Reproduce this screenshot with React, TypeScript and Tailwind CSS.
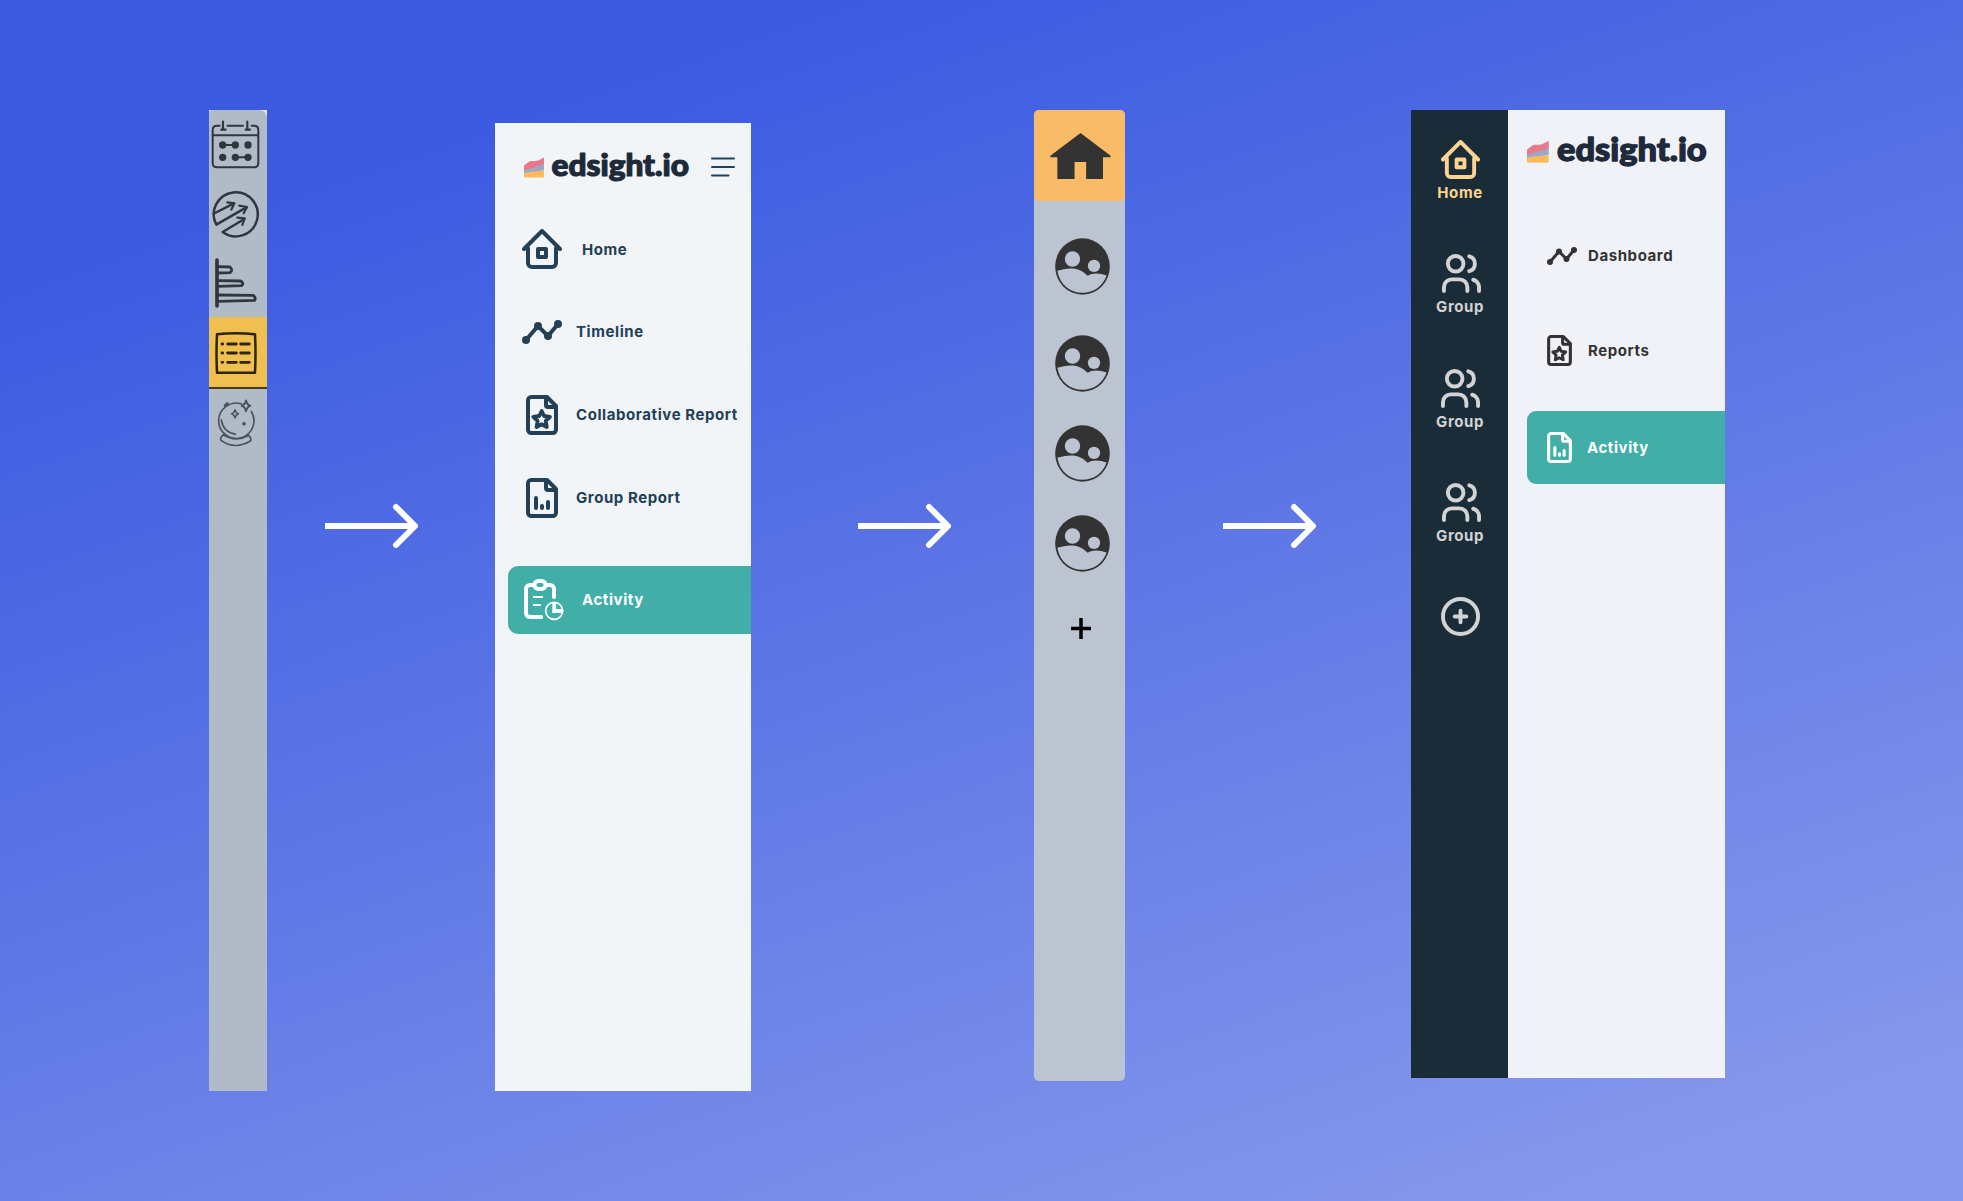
import type { ReactNode } from 'react';

type IconProps = { className?: string };

function Label({ className = '', children }: { className?: string; children: ReactNode }) {
  return (
    <span className={`whitespace-nowrap font-['Inter',sans-serif] text-[15px] leading-5 font-[650] tracking-[0.58px] ${className}`}>
      {children}
    </span>
  );
}

function HomeIcon({ className }: IconProps) {
  return (
    <svg viewBox="0 0 20 20" className={className} fill="none" stroke="currentColor" strokeWidth="2" strokeLinecap="round" strokeLinejoin="round">
      <path d="M1 10l9-9 9 9" />
      <path d="M3 9.5V17a2 2 0 0 0 2 2h10a2 2 0 0 0 2-2V9.500" />
      <path d="M8 10h4v4H8z" />
    </svg>
  );
}

function TimelineIcon({ className }: IconProps) {
  return (
    <svg viewBox="0 0 20 12" className={className} fill="currentColor">
      <path d="M2 10l6-7 5 5 5-6" fill="none" stroke="currentColor" strokeWidth="2" />
      <circle cx="2" cy="10" r="2" />
      <circle cx="8" cy="3" r="2" />
      <circle cx="13" cy="8" r="2" />
      <circle cx="18" cy="2" r="2" />
    </svg>
  );
}

function FileIcon({ className, children }: IconProps & { children: ReactNode }) {
  return (
    <svg viewBox="0 0 16 20" className={className} fill="none" stroke="currentColor" strokeWidth="2" strokeLinecap="round" strokeLinejoin="round">
      <path d="M2.600 1h7.900L15 5.500v11.900a1.600 1.600 0 0 1-1.600 1.600H2.600A1.600 1.600 0 0 1 1 17.400V2.600A1.600 1.600 0 0 1 2.600 1z" />
      <path d="M10 1.200V5a1 1 0 0 0 1 1h3.800" />
      {children}
    </svg>
  );
}

function FileStarIcon({ className }: IconProps) {
  return (
    <FileIcon className={className}>
      <path d="M7.850 8l1.200 2.500 2.950.4-2.150 2.050.55 3.050-2.550-1.350L5.300 16l.5-3.050-2.150-2.050 2.950-.4z" strokeWidth="1.900" />
    </FileIcon>
  );
}

function FileChartIcon({ className }: IconProps) {
  return (
    <FileIcon className={className}>
      <path d="M5 10v5M8 14v1M11 12v3" />
    </FileIcon>
  );
}

function ClipboardIcon({ className }: IconProps) {
  return (
    <svg viewBox="0 0 20 21" className={className} fill="none" stroke="currentColor" strokeWidth="2" strokeLinecap="round">
      <rect x="5.200" y="1" width="5.600" height="4" rx="2" />
      <path d="M4.500 3H3a2 2 0 0 0-2 2v12a2 2 0 0 0 2 2h5.600M11.500 3H13a2 2 0 0 1 2 2v4" />
      <path d="M4.500 9h5M4.500 13h4" strokeWidth="1" strokeLinecap="butt" />
      <circle cx="15.100" cy="15.900" r="4.250" strokeWidth=".85" />
      <path d="M15.100 11.600V16h4.300" strokeLinejoin="miter" strokeLinecap="butt" strokeWidth="1.900" />
    </svg>
  );
}

function GroupIcon({ className }: IconProps) {
  return (
    <svg viewBox="0 0 20 20" className={className} fill="none" stroke="currentColor" strokeWidth="2" strokeLinecap="round">
      <circle cx="7" cy="5" r="4" />
      <path d="M14 1.200a3.950 3.950 0 0 1 0 7.600" />
      <path d="M1 19v-2a4 4 0 0 1 4-4h4a4 4 0 0 1 4 4v2" />
      <path d="M16 13.200a4 4 0 0 1 3 3.800v2" />
    </svg>
  );
}

function CirclePlusIcon({ className }: IconProps) {
  return (
    <svg viewBox="0 0 20 20" className={className} fill="none" stroke="currentColor" strokeWidth="2" strokeLinecap="round">
      <circle cx="10" cy="10" r="9" />
      <path d="M10 7v6M7 10h6" />
    </svg>
  );
}

function Logo({ className }: IconProps) {
  return (
    <svg viewBox="0 0 168 32" className={`overflow-visible ${className}`}>
      <path d="M0 17H20V22.500Q20 23.500 19 23.500H1Q0 23.500 0 22.500z" fill="#ffba5c" />
      <path d="M20 9V16.200C14 18 9 16.500 0 19.200V13z" fill="#9ba9c6" />
      <path d="M0 11.500L5 7.700Q6 7 7.500 7H11Q13 7 14.500 6.200L20 3.500V9.700C14 13 8 12.500 0 17z" fill="#e8798c" />
      <text
        x="27.500"
        y="22.200"
        textLength="137.500"
        lengthAdjust="spacingAndGlyphs"
        className="fill-[#1e2a3a] stroke-[#1e2a3a] font-['Lato',sans-serif] text-[30px] font-black"
        strokeWidth="1.200"
        strokeLinejoin="round"
      >
        edsight.io
      </text>
    </svg>
  );
}

function Arrow({ className }: IconProps) {
  return (
    <svg viewBox="0 0 94 46" className={className} fill="none" stroke="white" strokeWidth="6">
      <path d="M0 23h88" />
      <path d="M71 4l19 19-19 19" strokeLinecap="round" strokeLinejoin="round" />
    </svg>
  );
}

function SketchIcons() {
  return (
    <>
      <svg viewBox="42 30 174 621" className="h-[207px] w-[58px]" fill="none" stroke="#30363e" strokeWidth="6" strokeLinecap="round" strokeLinejoin="round">
        <path d="M74 77h-8q-13 0-13 13v99q0 13 13 13h111q13 0 13-13V90q0-13-13-13h-7M97 77h47M54 106h135" />
        <path d="M84 65v23M79 89h13M157 65v23M152 89h13" strokeWidth="6.500" />
        <path d="M83 135h38M121 172h38" />
        <g fill="#30363e">
          <circle cx="83" cy="135" r="8" />
          <circle cx="121" cy="135" r="8" />
          <circle cx="159" cy="135" r="8" />
          <circle cx="83" cy="172" r="8" />
          <circle cx="121" cy="172" r="8" />
          <circle cx="159" cy="172" r="8" />
        </g>
        <path d="M64 374A66 66 0 1 1 83 396M64 374L154 322M83 396l65-39M60 339l57-29" strokeWidth="7.500" />
        <path d="M97 307l21 3-9 19M133 317l23 4-10 19M127 353l22 2-7 20" strokeWidth="6.500" />
        <path d="M66 480v138" strokeWidth="11" />
        <path d="M69 500l36 1q10 9 0 17l-36 1M69 542l68 1q11 7 3 14l-71 2M69 585l105 1q10 6 5 15l-110 3" strokeWidth="8.500" />
      </svg>
      <div className="flex h-[72px] items-start border-b-2 border-[#4a3a1c] bg-[#efc050]">
        <svg viewBox="42 650 174 210" className="h-[70px] w-[58px]" fill="none" stroke="#2e2410" strokeWidth="7.500" strokeLinejoin="round" strokeLinecap="round">
          <path d="M66 702q55-6 114 0 3 56 0 115-57 1-114 0-3-60 0-115z" />
          <path d="M98 731h26M137 731h26M98 758h26M137 758h26M98 786h26M137 786h26M81 731h2M81 758h2M81 786h2" strokeWidth="8.500" />
        </svg>
      </div>
      <svg viewBox="42 866 174 194" className="h-[65px] w-[58px]" fill="none" stroke="#4b525c" strokeWidth="5" strokeLinejoin="round" strokeLinecap="round">
        <path d="M139 910A53 53 0 1 0 169 933M84 1003q-8 7-7 16 43 31 90 2 2-10-6-16M84 1003q38 23 77 2" />
        <path d="M79 958q5 36 42 43" />
        <path d="M153 900q3 13 13 16-10 3-13 16-3-13-13-16 10-3 13-16z" strokeWidth="6" />
        <path d="M120 928q2 9 10 12-8 3-10 12-2-9-10-12 8-3 10-12z" strokeWidth="5" />
        <circle cx="147" cy="970" r="3" fill="#4b525c" />
        <path d="M90 915l7-6" strokeWidth="8" />
      </svg>
    </>
  );
}

function AvatarIcon({ className }: IconProps) {
  return (
    <svg viewBox="105 413 165 170" className={className}>
      <ellipse cx="187.500" cy="498" rx="82" ry="84.500" fill="#333333" />
      <g fill="#bcc3d1">
        <circle cx="157.500" cy="475.500" r="23" />
        <circle cx="222" cy="496" r="18.500" />
        <path d="M112 511C140 503 174 496 203 526C220 515 240 519 260 525C248 557 221 577 187 577C150 577 120 554 112 511z" />
      </g>
    </svg>
  );
}

function RailItem({ className = '', iconClass, icon, label }: { className?: string; iconClass: string; icon: ReactNode; label: string }) {
  return (
    <div className={`flex h-[114px] flex-col items-center ${className}`}>
      <div className={`flex ${iconClass}`}>{icon}</div>
      <Label className="mt-[4px] pl-px">{label}</Label>
    </div>
  );
}

export default function App() {
  return (
    <main className="flex h-[1201px] w-[1963px] items-start overflow-hidden bg-[linear-gradient(161deg,#3c5be1_16%,#8799ec_94%)]">
      <section className="mt-[110px] ml-[209px] h-[981px] w-[58px] shrink-0 bg-[#e9ecf2]">
        <div className="flex h-full flex-col rounded-tl-[3px] rounded-tr-[8px] bg-[#b1bbc8]">
          <SketchIcons />
        </div>
      </section>

      <Arrow className="mt-[503px] ml-[58px] h-[46px] w-[94px] shrink-0" />

      <section className="mt-[123px] ml-[76px] flex h-[968px] w-[256px] shrink-0 flex-col bg-[#f1f5f8] text-[#234057]">
        <header className="flex h-[84px] items-start pt-[31px] pl-[29px]">
          <Logo className="h-[32px] w-[168px]" />
          <svg viewBox="0 0 24 20" className="mt-[3px] ml-[19px] h-[20px] w-[24px]" stroke="currentColor" strokeWidth="2" strokeLinecap="round">
            <path d="M1 1.500h22M1 10h22M1 18.500h16.500" />
          </svg>
        </header>
        <nav className="flex flex-col">
          <div className="flex h-[84px] items-center pl-[27px]">
            <HomeIcon className="size-[40px]" />
            <Label className="mt-px ml-[20px]">Home</Label>
          </div>
          <div className="flex h-[82px] items-center pl-[27px]">
            <TimelineIcon className="h-[24px] w-[40px]" />
            <Label className="ml-[14px]">Timeline</Label>
          </div>
          <div className="flex h-[84px] items-center pl-[31px]">
            <FileStarIcon className="h-[40px] w-[32px]" />
            <Label className="ml-[18px]">Collaborative Report</Label>
          </div>
          <div className="flex h-[82px] items-center pl-[31px]">
            <FileChartIcon className="h-[40px] w-[32px]" />
            <Label className="ml-[18px]">Group Report</Label>
          </div>
          <div className="mt-[27px] ml-[13px] flex h-[68px] items-center rounded-l-[10px] bg-[#41afa7] pl-[16px] text-white">
            <ClipboardIcon className="h-[42px] w-[40px]" />
            <Label className="ml-[18px]">Activity</Label>
          </div>
        </nav>
      </section>

      <Arrow className="mt-[503px] ml-[107px] h-[46px] w-[94px] shrink-0" />

      <section className="mt-[110px] ml-[82px] flex h-[971px] w-[91px] shrink-0 flex-col rounded-[5px] bg-[#bcc3d1]">
        <div className="flex h-[91px] justify-center rounded-[5px] bg-[#f9bb67] pt-[23px]">
          <svg viewBox="90 98 182 139" className="ml-[2px] h-[46px] w-[61px]" fill="#333333">
            <path d="M181 98l91 69v4h-23v66h-51v-51h-35v51h-52v-66H90v-4z" />
          </svg>
        </div>
        <div className="flex flex-col pl-[21px]">
          <AvatarIcon className="mt-[37px] h-[57px] w-[55px]" />
          <AvatarIcon className="mt-[40px] h-[57px] w-[55px]" />
          <AvatarIcon className="mt-[33px] h-[57px] w-[55px]" />
          <AvatarIcon className="mt-[33px] h-[57px] w-[55px]" />
          <svg viewBox="0 0 20 21" className="mt-[46px] ml-[16px] h-[21px] w-[20px]" stroke="black" strokeWidth="3.500">
            <path d="M10 0v21M0 10.500h20" />
          </svg>
        </div>
      </section>

      <Arrow className="mt-[503px] ml-[98px] h-[46px] w-[94px] shrink-0" />

      <section className="mt-[110px] ml-[94px] flex h-[968px] w-[314px] shrink-0">
        <nav className="flex w-[97px] flex-col bg-[#1b2c39] pt-[30px] text-[#d3d3d3]">
          <RailItem className="text-[#ffd391]" iconClass="pl-[1px]" icon={<HomeIcon className="size-[39px]" />} label="Home" />
          <RailItem iconClass="pl-[4px]" icon={<GroupIcon className="size-[39px]" />} label="Group" />
          <RailItem className="mt-px" iconClass="pl-[2px]" icon={<GroupIcon className="size-[39px]" />} label="Group" />
          <RailItem iconClass="pl-[4px]" icon={<GroupIcon className="size-[39px]" />} label="Group" />
          <CirclePlusIcon className="ml-px size-[39px] self-center" />
        </nav>
        <div className="flex w-[217px] flex-col bg-[#f1f2f8] pl-[19px] text-[#333333]">
          <header className="h-[98px] pt-[27px]">
            <Logo className="h-[35px] w-[183px]" />
          </header>
          <div className="flex h-[95px] items-center pl-[20px]">
            <TimelineIcon className="h-[18px] w-[30px]" />
            <Label className="ml-[11px]">Dashboard</Label>
          </div>
          <div className="flex h-[94px] items-center pl-[20px]">
            <FileStarIcon className="h-[31px] w-[25px]" />
            <Label className="mt-px ml-[16px]">Reports</Label>
          </div>
          <div className="mt-[14px] flex h-[73px] items-center rounded-l-[9px] bg-[#41afa7] pl-[20px] text-white">
            <FileChartIcon className="h-[31px] w-[25px]" />
            <Label className="ml-[15px]">Activity</Label>
          </div>
        </div>
      </section>
    </main>
  );
}
